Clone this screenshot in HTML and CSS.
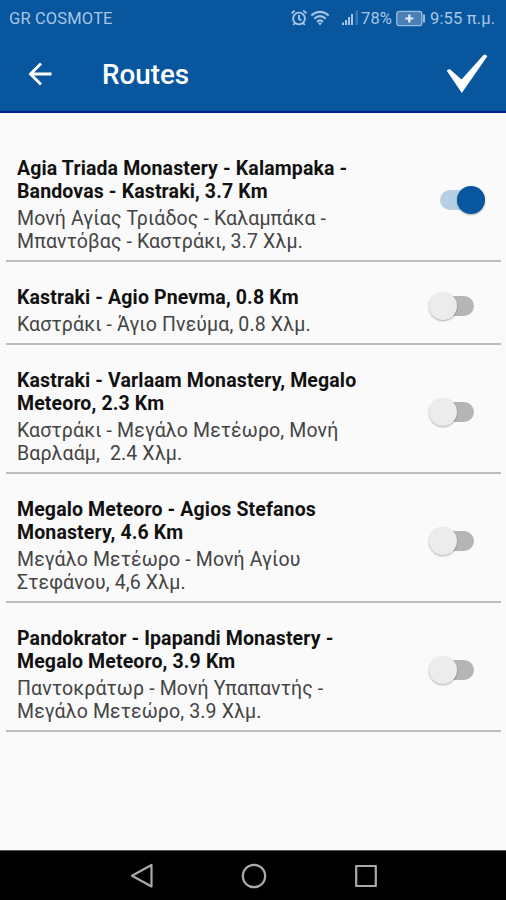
FILE: index.html
```html
<!DOCTYPE html>
<html lang="en">
<head>
<meta charset="utf-8">
<title>Routes</title>
<link rel="stylesheet" href="styles.css">
</head>
<body>
<header class="top">
  <div class="status">
    <span class="carrier">GR COSMOTE</span>
    <svg class="alarm" width="18" height="18" viewBox="0 0 18 18" fill="none" stroke="currentColor" stroke-width="1.9"><circle cx="9" cy="9.5" r="5.9"/><path d="M9 6v4l2.4 1.5M1.5 4.4l3.2-2.8M16.500 4.400l-3.200-2.800M4.800 14l-1.500 2M13.200 14l1.500 2"/></svg>
    <svg class="wifi" width="20" height="16" viewBox="0 0 20 16" fill="none" stroke="currentColor" stroke-width="2.1"><path d="M1.300 5.500q8.700-7.400 17.400 0M4.200 8.700q5.800-5 11.600 0M7 11.700q3-2.500 6 0"/><path d="M7.800 12.800h4.400L10 15.500z" fill="currentColor" stroke="none"/></svg>
    <svg class="signal" width="17" height="16" viewBox="0 0 17 16" fill="currentColor"><path d="M0 12.500h2V15H0zM3 10h2v5H3zM6 7h2v8H6zM9 4h2v11H9z"/><path d="M13.500 0.500h2.500V15h-2.500z" opacity=".3"/></svg>
    <span class="percent">78%</span>
    <svg class="battery" width="30" height="17" viewBox="0 0 30 17"><rect x=".8" y="1.300" width="25" height="14.400" rx="2.500" fill="#4a80b5" stroke="#9dbcdc" stroke-width="1.300"/><path d="M13.300 4.500v8M9.300 8.500h8" stroke="#e5effa" stroke-width="2.200"/><path d="M28 4.500v8" stroke="#9dbcdc" stroke-width="2"/></svg>
    <span class="clock">9:55 π.μ.</span>
  </div>
  <div class="bar">
    <svg class="back" width="24" height="24" viewBox="0 0 24 24" fill="none" stroke="#fff" stroke-width="2.900"><path d="M23.500 12H2.500M13 1.500L2.500 12 13 22.500"/></svg>
    <h1><span>Routes</span></h1>
    <svg class="done" width="42" height="40" viewBox="0 0 42 40" fill="#fff"><path d="M0.800 16.800Q2 14.600 4 15.300L15.500 25.500 37.500 1Q39.500-.2 41.300 2.300L15.800 39z"/></svg>
  </div>
</header>
<main class="routes">
  <section class="route">
    <div class="names">
      <h2><span>Agia Triada Monastery - Kalampaka -</span><span>Bandovas - Kastraki, 3.7 Km</span></h2>
      <p><span>Μονή Αγίας Τριάδος - Καλαμπάκα -</span><span>Μπαντόβας - Καστράκι, 3.7 Χλμ.</span></p>
    </div>
    <div class="switch on"></div>
  </section>
  <section class="route">
    <div class="names">
      <h2><span>Kastraki - Agio Pnevma, 0.8 Km</span></h2>
      <p><span>Καστράκι - Άγιο Πνεύμα, 0.8 Χλμ.</span></p>
    </div>
    <div class="switch"></div>
  </section>
  <section class="route">
    <div class="names">
      <h2><span>Kastraki - Varlaam Monastery, Megalo</span><span>Meteoro, 2.3 Km</span></h2>
      <p><span>Καστράκι - Μεγάλο Μετέωρο, Μονή</span><span>Βαρλαάμ,&nbsp; 2.4 Χλμ.</span></p>
    </div>
    <div class="switch"></div>
  </section>
  <section class="route">
    <div class="names">
      <h2><span>Megalo Meteoro - Agios Stefanos</span><span>Monastery, 4.6 Km</span></h2>
      <p><span>Μεγάλο Μετέωρο - Μονή Αγίου</span><span>Στεφάνου, 4,6 Χλμ.</span></p>
    </div>
    <div class="switch"></div>
  </section>
  <section class="route">
    <div class="names">
      <h2><span>Pandokrator - Ipapandi Monastery -</span><span>Megalo Meteoro, 3.9 Km</span></h2>
      <p><span>Παντοκράτωρ - Μονή Υπαπαντής -</span><span>Μεγάλο Μετεώρο, 3.9 Χλμ.</span></p>
    </div>
    <div class="switch"></div>
  </section>
</main>
<nav class="keys">
  <svg width="24" height="26" viewBox="0 0 24 26"><path d="M21.500 2v21.500L2 12.800z"/></svg>
  <svg width="26" height="26" viewBox="0 0 26 26"><circle cx="13" cy="13" r="11.200"/></svg>
  <svg width="24" height="26" viewBox="0 0 24 26"><rect x="2.200" y="3" width="19.600" height="20"/></svg>
</nav>
</body>
</html>
```
FILE: styles.css
```css
* {
  box-sizing: border-box;
}

body {
  margin: 0;
  height: 900px;
  display: flex;
  flex-direction: column;
  background: #fafafa;
  font-family: Roboto, "Noto Sans", sans-serif;
  overflow: hidden;
}

.top {
  height: 113px;
  background: #07569e;
  border-bottom: 2px solid #04208a;
}

.status {
  height: 36px;
  padding-left: 9px;
  display: flex;
  align-items: center;
  color: #a9c6e4;
  font-size: 16.5px;
  letter-spacing: 0.15px;
  white-space: nowrap;
}

.carrier {
  width: 281px;
  flex: none;
}

.status svg {
  flex: none;
}

.wifi {
  margin-left: 2px;
}

.signal {
  margin-left: 12px;
}

.percent {
  width: 34px;
  margin-left: 2px;
}

.battery {
  margin-left: 1px;
}

.clock {
  margin-left: 4px;
}

.bar {
  height: 75px;
  display: flex;
  align-items: center;
  padding-left: 28px;
}

h1 {
  margin: 2px 0 0 50px;
  width: 344px;
  color: #fff;
  font-size: 27.8px;
  font-weight: 500;
  line-height: 34px;
}

.back {
  margin-top: 1px;
}

.routes {
  flex: 1;
  padding: 20px 5px 0 6px;
}

.route {
  display: flex;
  align-items: center;
  justify-content: space-between;
  padding: 24px 27px 7px 11px;
  border-bottom: 2px solid #bcbcbc;
}

h2,
p {
  margin: 0;
  font-size: 19.500px;
  letter-spacing: 0.13px;
  line-height: 23px;
  white-space: nowrap;
}

h2 {
  font-weight: 700;
  color: #111;
}

p {
  margin-top: 4px;
  font-weight: 400;
  color: #444;
}

h2 span,
p span {
  display: block;
  width: max-content;
}

.switch {
  display: flex;
  align-items: center;
  flex: none;
  width: 45px;
  height: 20px;
  margin-bottom: 10px;
  border-radius: 10px;
  background: #b5b5b5;
}

.switch::before {
  content: "";
  width: 28px;
  height: 28px;
  flex: none;
  border-radius: 50%;
  background: #ececec;
  box-shadow: 0 1px 2px rgba(0, 0, 0, .3);
}

.switch.on {
  justify-content: flex-end;
  background: #b5cfe5;
  margin-right: -11px;
}

.switch.on::before {
  background: #07569e;
}

.keys {
  height: 50px;
  background: #000;
  border-top: 1px solid #555;
  display: flex;
  align-items: center;
  justify-content: center;
  gap: 87px;
  padding-left: 2px;
}

.keys svg {
  fill: none;
  stroke: #aaa;
  stroke-width: 2.200;
  stroke-linejoin: round;
}
```
